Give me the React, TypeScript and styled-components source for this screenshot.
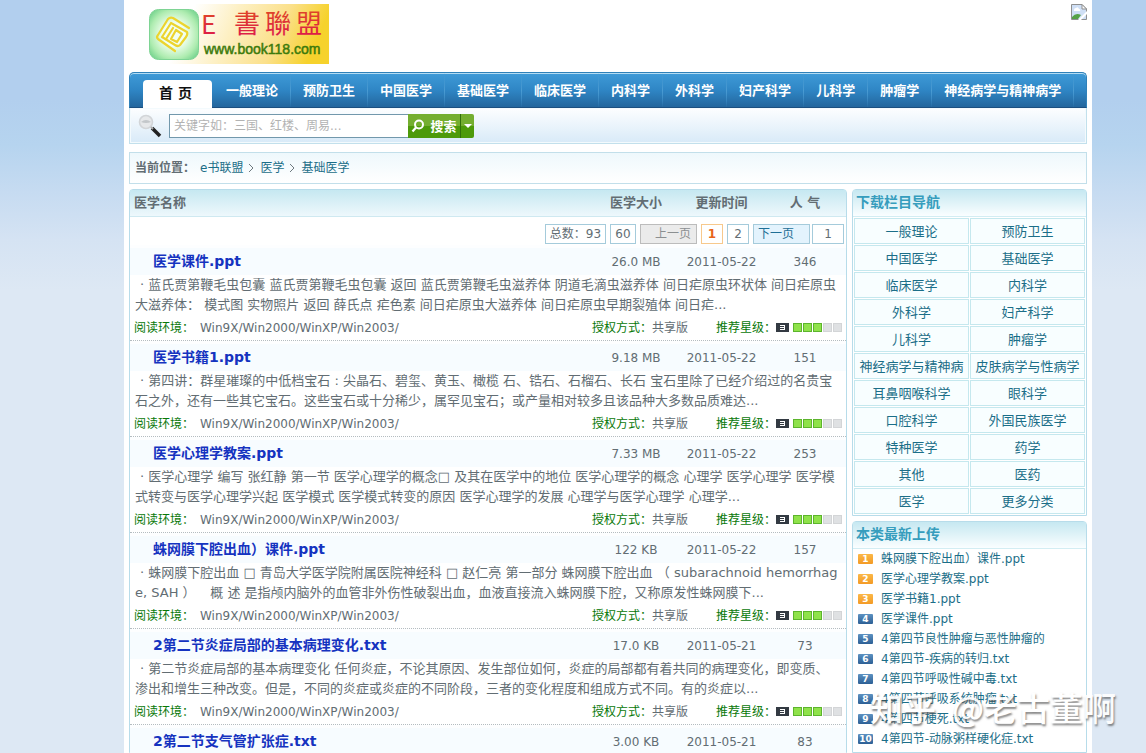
import React from 'react';
import styled, { createGlobalStyle } from 'styled-components';

const FONT = '"DejaVu Sans", "Noto Sans CJK SC", sans-serif';

const GlobalStyle = createGlobalStyle`
  * { box-sizing: border-box; }
  body {
    margin: 0;
    background: #dde8f4;
    color: #626d73;
    font: 12px/20px ${FONT};
  }
  a { color: #1b6e88; text-decoration: none; }
  a:hover { text-decoration: underline; }
  ul, ol { list-style: none; margin: 0; padding: 0; }
  h2 { margin: 0; }
`;

const Shell = styled.div`
  position: relative;
  display: flex;
  height: 100vh;
  overflow: hidden;
  padding: 0 54px 0 124px;
  background: linear-gradient(#b2cfee 0, #b2cfee 100px, #b6d4ef 145px, #c6dbf1 192px, #d5e3f3 240px, #dde8f4 290px);
`;

const Page = styled.div`
  flex: 1;
  min-width: 0;
  display: flex;
  flex-direction: column;
  padding: 0 5px;
  background: #fff;
`;

const Header = styled.header`
  display: flex;
  justify-content: space-between;
  align-items: flex-start;
  height: 72px;
  padding: 4px 0 0 20px;
`;

const Nav = styled.nav`
  display: flex;
  align-items: flex-end;
  height: 36px;
  padding-left: 13px;
  border-radius: 5px 5px 0 0;
  border: 1px solid #2f81b9;
  border-bottom-color: #1b4f80;
  box-shadow: inset 0 1px 0 #b4dcf3;
  background: linear-gradient(#3f9bd8, #2f86c5 50%, #23669d);
`;

const HomeTab = styled.a`
  width: 69px;
  height: 28px;
  margin-right: 2px;
  margin-bottom: -1px;
  padding-right: 4px;
  border-radius: 4px 4px 0 0;
  background: #fff;
  color: #111;
  font-size: 14px;
  font-weight: bold;
  line-height: 27px;
  text-align: center;
`;

const NavList = styled.ul`
  display: flex;
  height: 34px;
`;

const NavItem = styled.li`
  padding: 0 12px;
  border-right: 1px solid;
  border-image: linear-gradient(#4a9bd200, #4a9bd2, #4a9bd200) 1;
  line-height: 36px;
  white-space: nowrap;
  a { color: #fff; font-size: 13px; font-weight: bold; }
`;

const SearchBar = styled.form`
  display: flex;
  align-items: center;
  height: 36px;
  padding-left: 8px;
  border: 1px solid #c2e0ec;
  border-top: 0;
  box-shadow: inset 0 0 0 1px #f3fafd;
  background: linear-gradient(#fdfeff, #d8eaf8);
`;

const SearchInput = styled.input`
  width: 239px;
  height: 24px;
  margin-left: 7px;
  padding: 0 4px;
  border: 1px solid #7298ac;
  border-right: 0;
  background: #fff;
  font: 12px ${FONT};
  &::placeholder { color: #b2b2b2; opacity: 1; }
`;

const GreenButton = styled.button<{ $width: number }>`
  display: flex;
  align-items: center;
  justify-content: center;
  gap: 5px;
  width: ${(p) => p.$width}px;
  height: 24px;
  padding: 0;
  border: 0;
  background: linear-gradient(#74ae30 50%, #4d9a0a 50%);
  color: #fff;
  font: bold 13px ${FONT};
  white-space: nowrap;
  & + & {
    border-left: 1px solid #32700a;
    border-radius: 0 2px 2px 0;
  }
`;

const Crumbs = styled.nav`
  display: flex;
  align-items: center;
  height: 32px;
  margin: 8px 0 5px;
  padding: 0 5px;
  border: 1px solid #c2dfea;
  background: linear-gradient(#eef8fc, #fff);
  strong { margin-right: 5px; }
  svg { margin: 0 5px; }
`;

const Columns = styled.div`
  flex: 1;
  display: flex;
  gap: 5px;
  min-height: 0;
`;

const Panel = styled.section`
  border: 1px solid #b7dcea;
  border-radius: 4px 4px 0 0;
  background: #fff;
`;

const ListPanel = styled(Panel)`
  flex: 1;
  min-width: 0;
`;

const Sidebar = styled.aside`
  display: flex;
  flex-direction: column;
  gap: 5px;
  width: 235px;
`;

const Table = styled.table`
  width: 100%;
  table-layout: fixed;
  border-spacing: 0;
  td, th { padding: 0; }
`;

const ColHead = styled.th<{ $left?: boolean }>`
  height: 27px;
  border-bottom: 1px solid #cfe9f1;
  background: linear-gradient(#c6e8f1, #eef8fc);
  font-size: 13px;
  text-align: ${(p) => (p.$left ? 'left' : 'center')};
  && { padding-left: ${(p) => (p.$left ? 4 : 0)}px; }
`;

const Pager = styled.div`
  display: flex;
  justify-content: flex-end;
  gap: 4px;
  height: 28px;
  padding: 7px 2px 0 0;
`;

const PageBox = styled.span<{ $width: number }>`
  width: ${(p) => p.$width}px;
  height: 20px;
  border: 1px solid #a5cbdb;
  line-height: 18px;
  text-align: center;
  white-space: nowrap;
`;

const PageNumber = styled(PageBox).attrs({ as: 'a' })<{ $current?: boolean; href?: string }>`
  color: ${(p) => (p.$current ? '#e8641b' : '#626d73')};
  border-color: ${(p) => (p.$current ? '#f7c98c' : '#a5cbdb')};
  font-weight: ${(p) => (p.$current ? 'bold' : 'normal')};
`;

const StepButton = styled.button`
  width: 57px;
  height: 20px;
  padding: 0 0 0 4px;
  border: 1px solid #a5cbdb;
  background: #e3f3fd;
  color: #1f6f96;
  font: 12px/18px ${FONT};
  text-align: left;
  &:disabled {
    padding: 0 5px 0 0;
    border-color: #bcbcbc;
    background: #ebebeb;
    color: #8b8f91;
    text-align: right;
  }
`;

const PageInput = styled.input`
  width: 32px;
  height: 20px;
  margin-left: -2px;
  padding: 0;
  border: 1px solid #a5cbdb;
  color: #626d73;
  font: 12px ${FONT};
  text-align: center;
`;

const TitleCell = styled.td<{ $name?: boolean }>`
  height: 30px;
  border-top: 3px solid #fdfeff;
  background: #f7fcff;
  text-align: ${(p) => (p.$name ? 'left' : 'center')};
  && { padding-left: ${(p) => (p.$name ? 23 : 0)}px; }
  a { color: #1533c0; font-size: 14px; font-weight: bold; }
`;

const Summary = styled.p`
  height: 40px;
  margin: 0;
  padding: 0 5px;
  overflow: hidden;
  font-size: 13px;
  line-height: 20px;
  text-indent: 5px;
  word-break: break-all;
`;

const Meta = styled.div`
  display: flex;
  align-items: center;
  height: 26px;
  padding: 0 4px;
  border-bottom: 1px dotted #b4bcc0;
`;

const Label = styled.span`
  color: #087808;
`;

const MetaItem = styled.span<{ $grow?: boolean }>`
  flex: ${(p) => (p.$grow ? 1 : 'none')};
  display: flex;
  align-items: center;
  gap: ${(p) => (p.$grow ? 6 : 0)}px;
  margin-left: ${(p) => (p.$grow ? 0 : 28)}px;
`;

const PanelTitle = styled.h2`
  height: 27px;
  padding-left: 3px;
  border-bottom: 1px solid #d3edf3;
  background: linear-gradient(#c6e8f1, #fafeff);
  color: #369dbd;
  font-size: 14px;
  line-height: 24px;
`;

const Categories = styled.ul`
  display: grid;
  grid-template-columns: 1fr 1fr;
  gap: 1px;
  padding: 1px;
  background: #fff;
`;

const Category = styled.li`
  height: 26px;
  border: 1px solid #c5e8ee;
  background: #f8feff;
  font-size: 13px;
  line-height: 25px;
  text-align: center;
  white-space: nowrap;
`;

const LatestPanel = styled(Panel)`
  flex: 1;
`;

const Latest = styled.ol`
  padding: 0 5px;
`;

const LatestItem = styled.li`
  display: flex;
  align-items: center;
  gap: 8px;
  white-space: nowrap;
`;

const Rank = styled.span<{ $top: boolean }>`
  width: 15px;
  height: 10px;
  border-radius: 1px;
  background: ${(p) => (p.$top ? 'linear-gradient(#fbb848, #f39a25)' : 'linear-gradient(#5d92c2, #2c5f95)')};
  color: #fff;
  font-size: 9px;
  font-weight: bold;
  line-height: 10px;
  text-align: center;
`;

const Watermark = styled.div`
  position: absolute;
  right: 30px;
  bottom: 24px;
  display: flex;
  gap: 16px;
  color: #fff;
  font: 500 33px/44px "Noto Sans CJK SC", sans-serif;
  text-shadow: 1px 2px 2px rgba(70, 70, 70, 0.7);
  opacity: 0.9;
  pointer-events: none;
`;

const Logo = () => (
  <svg width="180" height="60" viewBox="0 0 180 60" role="img" aria-label="E書聯盟">
    <defs>
      <linearGradient id="gold" x1="0" y1="0" x2="1" y2="0.15">
        <stop offset="0.25" stopColor="#fff" />
        <stop offset="0.5" stopColor="#fdf0c4" />
        <stop offset="0.78" stopColor="#fbe08a" />
        <stop offset="1" stopColor="#f6d22c" />
      </linearGradient>
      <radialGradient id="leaf" r="0.65">
        <stop offset="0.35" stopColor="#f2fff0" />
        <stop offset="0.75" stopColor="#aeecb0" />
        <stop offset="1" stopColor="#6fd08a" />
      </radialGradient>
      <linearGradient id="ink" x1="0" y1="0" x2="0" y2="1">
        <stop offset="0" stopColor="#e0521c" />
        <stop offset="1" stopColor="#dc1450" />
      </linearGradient>
    </defs>
    <rect width="180" height="60" fill="url(#gold)" />
    <rect x="0.5" y="5.5" width="49" height="50" rx="9" fill="url(#leaf)" stroke="#7ed494" />
    <g fill="none" stroke="#ecd42e" strokeWidth="2.2" strokeLinejoin="round" strokeLinecap="round">
      <path d="M26 47 L9 35 Q7 33 9 31 L19 15 Q21 13 24 14 L40 24" />
      <path d="M13 33 L22 19 L38 28 Q39 30 37 33 L31 41 Q29 43 26 41 Z" />
      <path d="M24 24 L17 35 M27 26 L33 30 L28 38 L22 35 Z" />
    </g>
    <g fontFamily='"Noto Sans CJK TC", sans-serif' fontSize="26" fill="url(#ink)">
      <text x="52" y="30">E</text>
      <text x="85" y="29">書</text>
      <text x="116" y="29">聯</text>
      <text x="147" y="29">盟</text>
    </g>
    <text x="55" y="50" fontFamily='"Liberation Sans", sans-serif' fontSize="14" fill="#3c7a0c" stroke="#3c7a0c" strokeWidth="0.5">
      www.book118.com
    </text>
  </svg>
);

const BrokenImage = () => (
  <svg width="16" height="16" viewBox="0 0 16 16" role="img" aria-label="图片">
    <path d="M0.5 0.5 H11 L15.5 5 V15.5 H0.5 Z" fill="#cfdff5" stroke="#8f8f8f" />
    <path d="M11 0.5 V5 H15.5 Z" fill="#fff" stroke="#8f8f8f" />
    <path d="M3 6 Q3 4 5 4 Q7 2 8 5 Q10 5 9 7 H3 Z" fill="#fff" />
    <path d="M1 15 V13 Q5 8 10 11 L7 15 Z" fill="#55a247" />
    <path d="M7 16 L16 7 V10 L10 16 Z" fill="#fff" />
  </svg>
);

const Magnifier = () => (
  <svg width="24" height="24" viewBox="0 0 24 24" aria-hidden="true">
    <path d="M14 14 L22 22" stroke="#222" strokeWidth="3.6" />
    <path d="M12 12 L15 15" stroke="#aaa" strokeWidth="2" />
    <circle cx="8" cy="8" r="6.5" fill="#e6e8ea" stroke="#d2d5d8" strokeWidth="1.6" />
    <path d="M3 8 Q8 4 13 8 Q8 10 3 8 Z" fill="#c3c7ca" />
  </svg>
);

const SearchGlyph = () => (
  <svg width="14" height="14" viewBox="0 0 14 14" aria-hidden="true">
    <circle cx="8" cy="5.5" r="4" fill="none" stroke="#fff" strokeWidth="2" />
    <path d="M5 8.5 L1.5 12.5" stroke="#fff" strokeWidth="2.2" />
  </svg>
);

const Caret = () => (
  <svg width="8" height="4" viewBox="0 0 8 4" aria-hidden="true">
    <path d="M0 0 H8 L4 4 Z" fill="#fff" />
  </svg>
);

const Chevron = () => (
  <svg width="7" height="10" viewBox="0 0 7 10" aria-hidden="true">
    <path d="M1 1 L5 5 L1 9" fill="none" stroke="#6f7a80" />
  </svg>
);

const Stars = ({ value }: { value: number }) => (
  <svg width="66" height="10" viewBox="0 0 66 10" role="img" aria-label={`${value} / 5`}>
    <rect width="13" height="9" fill="#333a42" />
    <path d="M4 2.5 H9 M4 4.5 H9 M4 6.5 H9 M8.5 2 V7" stroke="#fff" fill="none" />
    {[0, 1, 2, 3, 4].map((i) => (
      <rect
        key={i}
        x={17.5 + i * 10}
        y="0.5"
        width="8"
        height="8"
        fill={i < value ? '#8fe24a' : '#dfe1e3'}
        stroke={i < value ? '#5cb52c' : '#d3d5d7'}
      />
    ))}
  </svg>
);

const navItems = ['一般理论', '预防卫生', '中国医学', '基础医学', '临床医学', '内科学', '外科学', '妇产科学', '儿科学', '肿瘤学', '神经病学与精神病学'];

const categories = [
  '一般理论', '预防卫生', '中国医学', '基础医学', '临床医学', '内科学', '外科学', '妇产科学', '儿科学', '肿瘤学',
  '神经病学与精神病', '皮肤病学与性病学', '耳鼻咽喉科学', '眼科学', '口腔科学', '外国民族医学', '特种医学', '药学',
  '其他', '医药', '医学', '更多分类',
];

const latest = [
  '蛛网膜下腔出血）课件.ppt', '医学心理学教案.ppt', '医学书籍1.ppt', '医学课件.ppt', '4第四节良性肿瘤与恶性肿瘤的',
  '4第四节-疾病的转归.txt', '4第四节呼吸性碱中毒.txt', '4第四节呼吸系统肿瘤.txt', '4第四节梗死.txt', '4第四节-动脉粥样硬化症.txt',
];

interface Doc {
  title: string;
  size: string;
  date: string;
  views: number;
  summary: string;
}

const docs: Doc[] = [
  {
    title: '医学课件.ppt', size: '26.0 MB', date: '2011-05-22', views: 346,
    summary: '蓝氏贾第鞭毛虫包囊 蓝氏贾第鞭毛虫包囊 返回 蓝氏贾第鞭毛虫滋养体 阴道毛滴虫滋养体 间日疟原虫环状体 间日疟原虫大滋养体： 模式图 实物照片 返回 薛氏点 疟色素 间日疟原虫大滋养体 间日疟原虫早期裂殖体 间日疟...',
  },
  {
    title: '医学书籍1.ppt', size: '9.18 MB', date: '2011-05-22', views: 151,
    summary: '第四讲：群星璀璨的中低档宝石 : 尖晶石、碧玺、黄玉、橄榄 石、锆石、石榴石、长石 宝石里除了已经介绍过的名贵宝石之外，还有一些其它宝石。这些宝石或十分稀少，属罕见宝石；或产量相对较多且该品种大多数品质难达...',
  },
  {
    title: '医学心理学教案.ppt', size: '7.33 MB', date: '2011-05-22', views: 253,
    summary: '医学心理学 编写 张红静 第一节 医学心理学的概念□ 及其在医学中的地位 医学心理学的概念 心理学 医学心理学 医学模式转变与医学心理学兴起 医学模式 医学模式转变的原因 医学心理学的发展 心理学与医学心理学 心理学...',
  },
  {
    title: '蛛网膜下腔出血）课件.ppt', size: '122 KB', date: '2011-05-22', views: 157,
    summary: '蛛网膜下腔出血 □ 青岛大学医学院附属医院神经科 □ 赵仁亮 第一部分 蛛网膜下腔出血 （ subarachnoid hemorrhage, SAH ）　\u00a0 概 述 是指颅内脑外的血管非外伤性破裂出血，血液直接流入蛛网膜下腔，又称原发性蛛网膜下...',
  },
  {
    title: '2第二节炎症局部的基本病理变化.txt', size: '17.0 KB', date: '2011-05-21', views: 73,
    summary: '第二节炎症局部的基本病理变化 任何炎症，不论其原因、发生部位如何，炎症的局部都有着共同的病理变化，即变质、渗出和增生三种改变。但是，不同的炎症或炎症的不同阶段，三者的变化程度和组成方式不同。有的炎症以...',
  },
  { title: '2第二节支气管扩张症.txt', size: '3.00 KB', date: '2011-05-21', views: 83, summary: '' },
];

const DocRows = ({ doc }: { doc: Doc }) => (
  <tbody>
    <tr>
      <TitleCell $name><a href="#doc">{doc.title}</a></TitleCell>
      <TitleCell>{doc.size}</TitleCell>
      <TitleCell>{doc.date}</TitleCell>
      <TitleCell>{doc.views}</TitleCell>
    </tr>
    {doc.summary && (
      <tr>
        <td colSpan={4}>
          <Summary>{`· ${doc.summary}`}</Summary>
          <Meta>
            <MetaItem $grow><Label>阅读环境：</Label>Win9X/Win2000/WinXP/Win2003/</MetaItem>
            <MetaItem><Label>授权方式：</Label>共享版</MetaItem>
            <MetaItem><Label>推荐星级：</Label><Stars value={3} /></MetaItem>
          </Meta>
        </td>
      </tr>
    )}
  </tbody>
);

export default function App() {
  return (
    <Shell>
      <GlobalStyle />
      <Page>
        <Header>
          <Logo />
          <BrokenImage />
        </Header>
        <Nav>
          <HomeTab href="#home">首 页</HomeTab>
          <NavList>
            {navItems.map((item) => (
              <NavItem key={item}><a href="#category">{item}</a></NavItem>
            ))}
          </NavList>
        </Nav>
        <SearchBar onSubmit={(e) => e.preventDefault()}>
          <Magnifier />
          <SearchInput aria-label="搜索" placeholder="关键字如：三国、红楼、周易..." />
          <GreenButton $width={52} type="submit"><SearchGlyph />搜索</GreenButton>
          <GreenButton $width={14} type="button" aria-label="更多"><Caret /></GreenButton>
        </SearchBar>
        <Crumbs>
          <strong>当前位置：</strong>
          <a href="#home">e书联盟</a>
          <Chevron />
          <a href="#medicine">医学</a>
          <Chevron />
          <a href="#basic">基础医学</a>
        </Crumbs>
        <Columns>
          <ListPanel>
            <Table>
              <colgroup>
                <col />
                <col width="86" />
                <col width="85" />
                <col width="82" />
              </colgroup>
              <thead>
                <tr>
                  <ColHead $left>医学名称</ColHead>
                  <ColHead>医学大小</ColHead>
                  <ColHead>更新时间</ColHead>
                  <ColHead>人 气</ColHead>
                </tr>
              </thead>
              <tbody>
                <tr>
                  <td colSpan={4}>
                    <Pager>
                      <PageBox $width={61}>总数：93</PageBox>
                      <PageBox $width={26}>60</PageBox>
                      <StepButton disabled>上一页</StepButton>
                      <PageNumber $width={22} $current href="#p1">1</PageNumber>
                      <PageNumber $width={22} href="#p2">2</PageNumber>
                      <StepButton>下一页</StepButton>
                      <PageInput aria-label="页码" defaultValue="1" />
                    </Pager>
                  </td>
                </tr>
              </tbody>
              {docs.map((doc) => <DocRows key={doc.title} doc={doc} />)}
            </Table>
          </ListPanel>
          <Sidebar>
            <Panel>
              <PanelTitle>下载栏目导航</PanelTitle>
              <Categories>
                {categories.map((name) => (
                  <Category key={name}><a href="#category">{name}</a></Category>
                ))}
              </Categories>
            </Panel>
            <LatestPanel>
              <PanelTitle>本类最新上传</PanelTitle>
              <Latest>
                {latest.map((name, i) => (
                  <LatestItem key={name}>
                    <Rank $top={i < 3}>{i + 1}</Rank>
                    <a href="#doc">{name}</a>
                  </LatestItem>
                ))}
              </Latest>
            </LatestPanel>
          </Sidebar>
        </Columns>
      </Page>
      <Watermark><span>知乎</span><span>@老古董啊</span></Watermark>
    </Shell>
  );
}
